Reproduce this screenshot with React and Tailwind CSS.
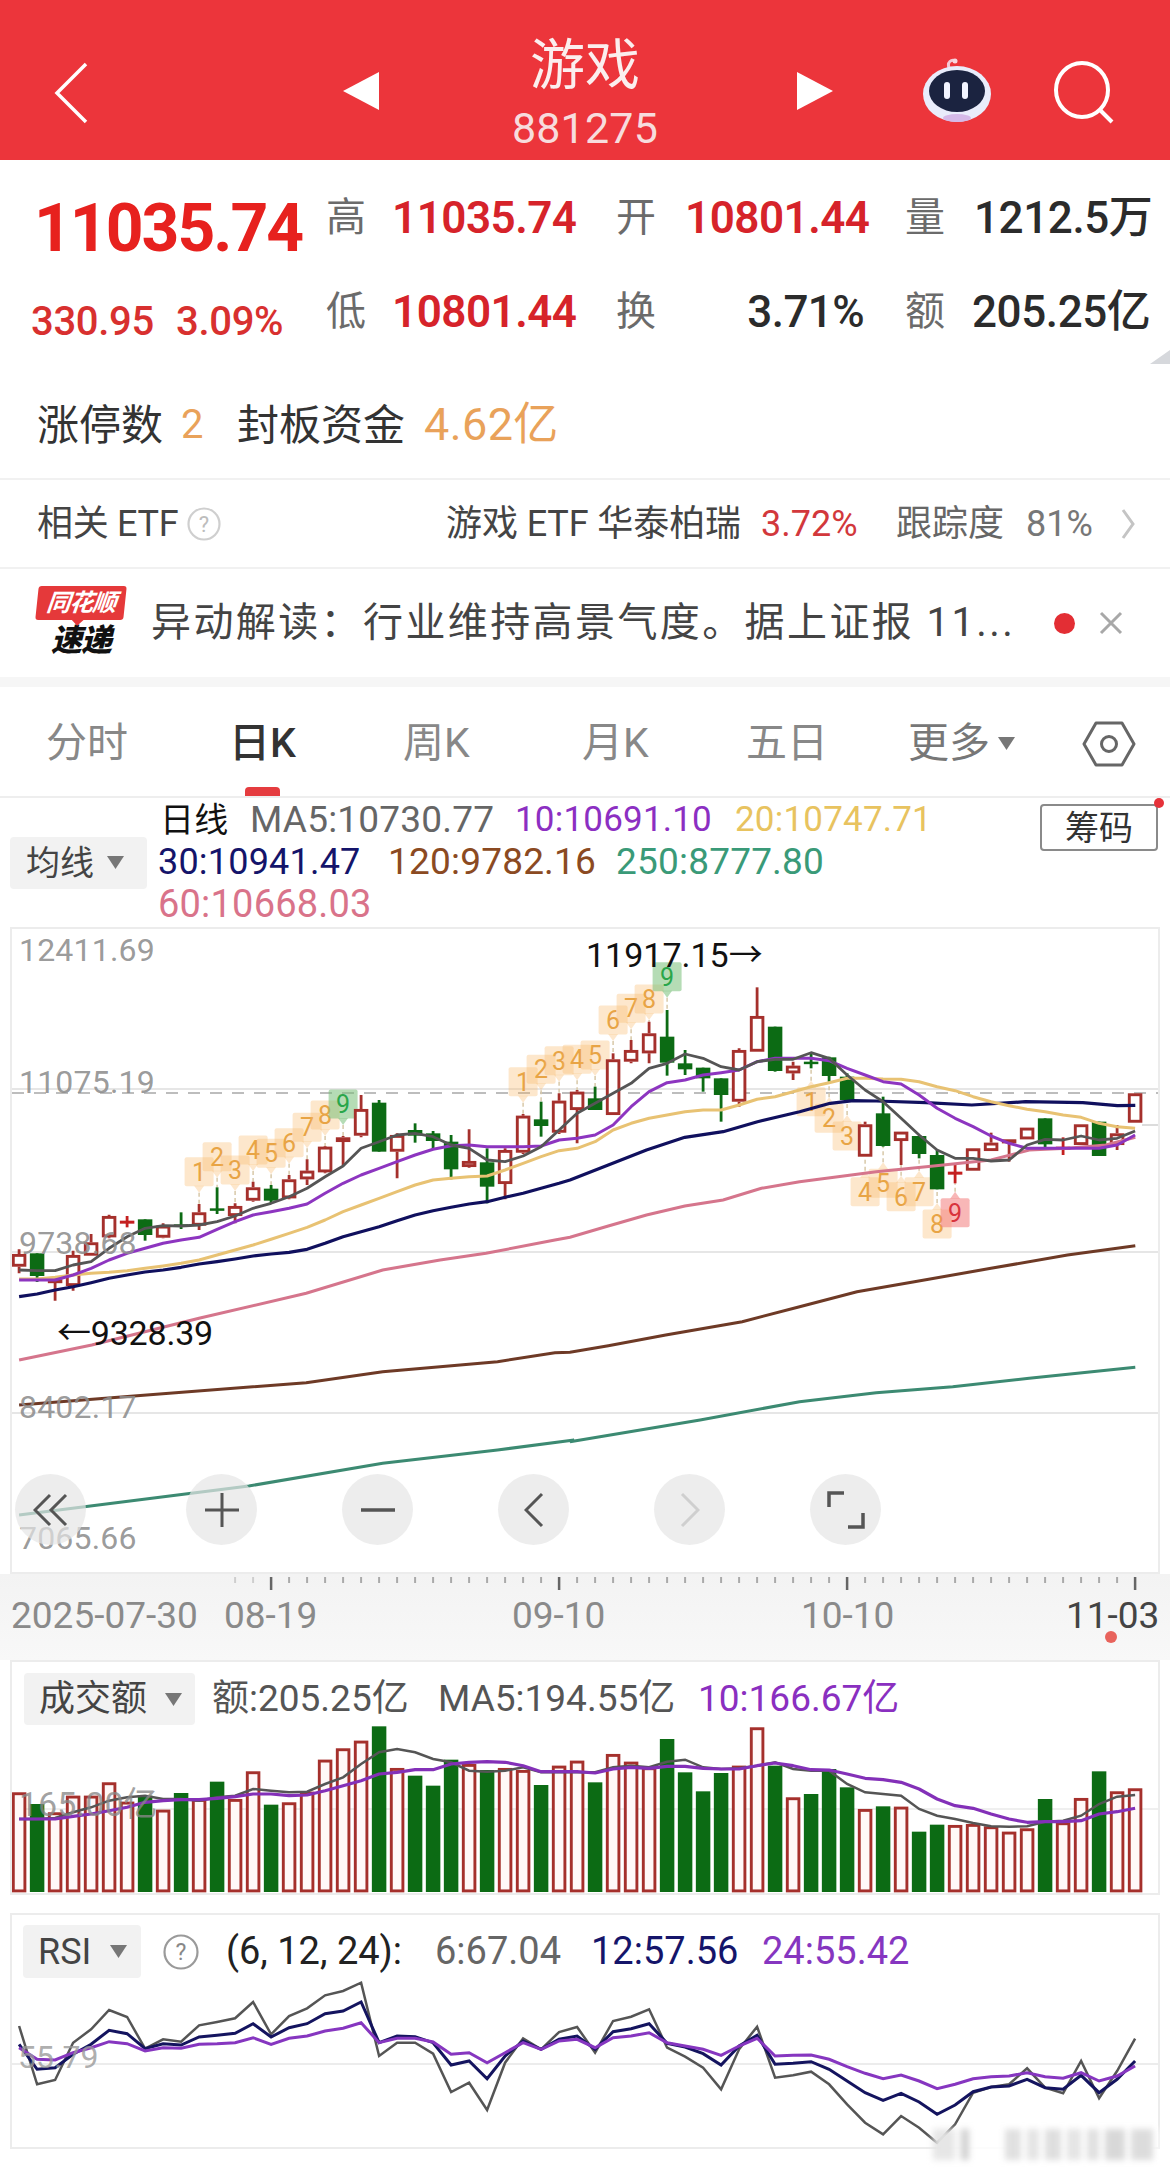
import React from "react";

const cx = (i) => 19.1 + 18 * i;
const ky = (v) => 1080 + v / 3;
const R = "#a5302c";
const G = "#0c6b14";

const candles = [
  ["r",508,522,560,580],["g",520,520,588,606],["r",595,598,603,662],["r",512,525,618,632],["r",462,487,527,527],
  ["r",404,408,472,475],["d",408,422,428,442],["g",418,418,465,482],["r",430,437,473,475],["g",397,433,440,447],
  ["r",372,397,437,450],["g",322,385,392,402],["r",370,378,408,430],["r",305,322,362,365],["g",315,326,362,370],
  ["r",285,298,355,358],["r",238,272,298,315],["r",198,200,277,280],["r",168,172,186,255],["r",45,87,167,172],
  ["g",60,68,215,215],["r",160,165,215,295],["g",130,150,167,188],["g",153,160,183,208],["g",165,185,268,298],
  ["r",148,243,261,263],["g",205,247,320,370],["r",205,210,312,358],["r",102,107,218,222],["g",65,118,138,170],
  ["r",40,62,158,162],["r",30,35,90,190],["g",20,55,90,90],["r",-80,-62,105,105],["r",-120,-90,-55,-50],
  ["r",-175,-140,-80,-50],["g",-210,-130,-52,-13],["g",-90,-50,-32,-15],["g",-37,-37,-5,35],["g",-5,-5,45,125],
  ["r",-95,-90,65,80],["r",-278,-192,-85,-85],["g",-160,-160,-27,-25],["r",-55,-43,-20,0],["g",-80,-55,-48,-35],
  ["g",-70,-68,-12,5],["g",-20,-10,60,60],["r",125,133,230,230],["g",50,100,198,200],["r",155,155,183,255],
  ["g",168,168,222,235],["g",210,225,328,328],["d",255,275,282,310],["r",205,205,272,272],["r",158,188,213,213],
  ["r",178,178,190,245],["r",143,143,178,178],["g",115,115,193,205],["d",172,200,205,225],["r",133,133,195,195],
  ["g",125,125,228,228],["r",135,160,195,210],["r",40,40,128,128],
];

const ma5 = [570,572,572,555,545,505,470,445,437,438,435,425,408,385,370,350,325,290,258,205,185,165,160,170,195,205,240,245,228,200,150,100,70,40,10,-35,-50,-78,-65,-40,-30,-55,-62,-62,-82,-65,-15,30,65,115,165,210,235,235,243,240,195,178,180,168,180,175,153];
const ma10 = [600,600,600,585,565,540,520,505,490,480,472,448,425,405,395,385,372,340,310,285,265,245,225,208,197,195,200,200,200,198,180,175,165,135,80,35,8,0,-15,-22,-30,-55,-65,-65,-65,-58,-35,-15,5,12,45,85,115,140,168,190,205,205,205,205,205,195,165];
const ma20 = [597,597,592,585,580,577,572,565,558,550,540,525,510,495,478,460,442,420,395,375,355,335,315,300,295,290,288,270,250,230,212,205,185,150,130,115,105,95,90,90,75,58,50,35,20,8,-5,-5,-3,-2,5,20,32,50,65,77,88,95,105,112,130,140,145];

const toI = (x, right) => (right ? 570 + x / 2.613 : x / 2.613);
const line = (arr) => arr.map((v, i) => `${cx(i).toFixed(1)},${ky(v).toFixed(1)}`).join(" ");
const freeLine = (left, right) =>
  [...left.map(([x, y]) => `${toI(x, false).toFixed(1)},${ky(y).toFixed(1)}`), ...right.map(([x, y]) => `${toI(x, true).toFixed(1)},${ky(y).toFixed(1)}`)].join(" ");

const ma30 = [650,642,630,620,608,595,585,576,570,562,552,545,537,528,522,517,508,490,470,455,440,422,405,392,382,372,365,352,340,325,310];
const ma30R = [[0,300],[100,255],[200,210],[300,172],[400,155],[490,125],[600,95],[680,70],[740,62],[800,63],[930,68],[1050,75],[1190,65],[1340,68],[1430,77],[1477,76]];
const ma60L = [[50,840],[240,795],[520,715],[800,640],[1000,570],[1150,540],[1270,520],[1450,480]];
const ma60R = [[0,472],[100,438],[200,405],[300,378],[400,360],[500,325],[600,305],[700,290],[800,275],[950,258],[1100,240],[1200,210],[1300,205],[1400,195],[1477,172]];
const ma120L = [[50,975],[350,948],[800,908],[1000,875],[1300,845],[1450,818]];
const ma120R = [[0,817],[100,797],[250,765],[450,725],[600,680],[750,635],[900,605],[1100,565],[1300,525],[1477,497]];
const ma250L = [[50,1305],[500,1240],[650,1218],[1000,1150],[1300,1110],[1500,1080]];
const ma250R = [[0,1085],[340,1020],[600,965],[800,938],[1000,920],[1200,895],[1477,862]];

const td = [
  [10,815,"1"],[11,770,"2"],[12,810,"3"],[13,750,"4"],[14,760,"5"],[15,728,"6"],[16,682,"7"],[17,645,"8"],[18,612,"9","g"],
  [28,545,"1"],[29,508,"2"],[30,482,"3"],[31,478,"4"],[32,465,"5"],[33,360,"6"],[34,325,"7"],[35,297,"8"],[36,230,"9","g"],
  [44,605,"1",null,1],[45,655,"2",null,1],[46,708,"3",null,1],[47,875,"4",null,1],[48,850,"5",null,1],[49,890,"6",null,1],[50,875,"7",null,1],[51,972,"8",null,1],[52,938,"9","p",1],
];

const tops = [1120,1155,1180,1130,1130,1090,1148,1130,1172,1122,1140,1088,1140,1057,1157,1150,1118,1022,988,965,922,1047,1070,1100,1022,1035,1053,1047,1053,1098,1040,1025,1090,1005,1028,1045,960,1060,1117,1062,1040,925,1040,1135,1125,1050,1105,1170,1162,1163,1238,1217,1218,1215,1222,1238,1228,1140,1210,1137,1057,1117,1108];
const volG = new Set([1,7,9,11,14,20,22,23,24,26,29,32,36,37,38,39,42,44,45,46,48,50,51,57,60]);
const vm5 = [1200,1200,1197,1180,1165,1145,1135,1130,1140,1140,1145,1135,1130,1110,1115,1120,1118,1095,1075,1035,1000,990,1000,1020,1030,1055,1058,1055,1045,1060,1060,1060,1060,1045,1040,1045,1028,1022,1045,1050,1048,1040,1030,1050,1055,1055,1095,1120,1125,1130,1170,1190,1200,1212,1222,1223,1222,1208,1205,1190,1155,1133,1128];
const vm10 = [1200,1200,1200,1192,1185,1175,1165,1150,1145,1142,1142,1138,1133,1125,1125,1130,1128,1115,1100,1085,1065,1060,1052,1052,1035,1030,1028,1030,1040,1058,1058,1058,1062,1050,1045,1048,1042,1042,1048,1050,1050,1040,1032,1040,1052,1053,1065,1078,1082,1090,1110,1140,1160,1168,1185,1200,1210,1208,1208,1205,1185,1178,1168];
const vy = (v) => 1420 + v / 3;

const r6 = [375,550,537,425,385,327,348,443,415,422,373,363,352,303,400,345,322,283,270,245,465,425,425,458,573,545,627,485,412,445,393,378,455,360,347,325,440,467,500,565,445,377,530,523,512,550,610,665,700,645,680,725,670,575,558,550,502,560,577,480,592,510,413];
const r12 = [430,505,500,460,430,388,398,443,428,432,408,403,397,368,408,380,368,338,330,303,425,405,407,425,492,480,533,465,420,445,415,405,445,392,383,368,427,438,458,492,435,403,490,487,482,505,540,575,598,577,603,640,612,572,558,555,535,560,565,523,575,535,480];
const r24 = [440,475,477,455,440,422,428,450,440,442,430,428,425,410,430,412,405,390,382,365,425,412,412,423,460,455,485,455,425,445,420,415,440,410,405,395,425,435,445,463,435,412,465,463,462,475,497,517,533,522,540,563,550,533,527,525,515,527,532,515,540,525,495];
const ry = (v) => 1900 + v / 3;
const pts = (arr, f) => arr.map((v, i) => `${cx(i).toFixed(1)},${f(v).toFixed(1)}`).join(" ");

const Num = ({ className = "", children }) => <span className={`whitespace-nowrap ${className}`}>{children}</span>;

function Caret({ className = "" }) {
  return (
    <svg width="17" height="13" viewBox="0 0 17 13" className={className}>
      <path d="M0 0H17L8.5 13Z" fill="#777" />
    </svg>
  );
}

function Header() {
  return (
    <div className="h-[160px] bg-[#ec353b] relative flex items-center text-white shrink-0">
      <svg width="36" height="62" viewBox="0 0 36 62" className="ml-[53px] mt-[26px] shrink-0">
        <path d="M33 2L4 31L33 60" stroke="#fff" strokeWidth="3.5" fill="none" />
      </svg>
      <svg width="36" height="38" viewBox="0 0 36 38" className="ml-[254px] mt-[22px] shrink-0">
        <path d="M36 0V38L0 19Z" fill="#fff" />
      </svg>
      <div className="w-[412px] mr-[6px] flex flex-col items-center shrink-0 mt-[26px]">
        <div className="text-[55px] leading-[60px] h-[70px] text-[#fbeeee]">游戏</div>
        <div className="text-[43px] leading-[46px] text-[#f7dcdd] tracking-[0.2px]">881275</div>
      </div>
      <svg width="36" height="38" viewBox="0 0 36 38" className="mt-[22px] shrink-0">
        <path d="M0 0V38L36 19Z" fill="#fff" />
      </svg>
      <svg width="72" height="66" viewBox="0 0 72 66" className="ml-[88px] mt-[22px] shrink-0">
        <path d="M28 10C26 4 30 1 35 3" stroke="#f4c8d4" strokeWidth="3" fill="none" />
        <circle cx="34" cy="3" r="2.5" fill="#f8d5de" />
        <ellipse cx="36" cy="36" rx="34" ry="28" fill="#e9ecfb" />
        <ellipse cx="36" cy="33" rx="28" ry="21" fill="#1b2340" />
        <rect x="23" y="24" width="6" height="17" rx="3" fill="#f2f4ff" />
        <rect x="41" y="24" width="6" height="17" rx="3" fill="#f2f4ff" />
        <ellipse cx="36" cy="60" rx="14" ry="4" fill="#d5b9e8" />
      </svg>
      <svg width="62" height="64" viewBox="0 0 62 64" className="ml-[60px] mt-[24px] shrink-0">
        <ellipse cx="29" cy="30" rx="26" ry="27" stroke="#fff" strokeWidth="4" fill="none" />
        <path d="M46 49L59 62" stroke="#fff" strokeWidth="4" fill="none" />
      </svg>
    </div>
  );
}

function Quote() {
  return (
    <div className="h-[318px] shrink-0 bg-white relative [font-family:Roboto,'Noto_Sans_CJK_SC',sans-serif]">
      <div className="grid grid-cols-[326px_66px_224px_69px_220px_69px_196px] grid-rows-[92px_96px] pt-[12px] items-center">
        <div className="pl-[34px] pt-[22px] text-[66px] leading-[68px] font-bold text-[#e7211e] tracking-[-2px] whitespace-nowrap">11035.74</div>
        <div className="text-[40px] text-[#6b6b6b]">高</div>
        <Num className="text-[44px] font-semibold text-[#d6232a] tracking-[-0.5px]">11035.74</Num>
        <div className="text-[40px] text-[#6b6b6b]">开</div>
        <Num className="text-[44px] font-semibold text-[#d6232a] tracking-[-0.5px]">10801.44</Num>
        <div className="text-[40px] text-[#6b6b6b]">量</div>
        <Num className="text-[44px] font-medium text-[#2b2b2b] tracking-[-0.4px]">1212.5万</Num>

        <div className="pl-[31px] pt-[20px] text-[40px] leading-[44px] font-medium text-[#d8302f] whitespace-nowrap flex gap-[22px] tracking-[-0.3px]">
          <span>330.95</span>
          <span>3.09%</span>
        </div>
        <div className="text-[40px] text-[#6b6b6b]">低</div>
        <Num className="text-[44px] font-semibold text-[#d6232a] tracking-[-0.5px]">10801.44</Num>
        <div className="text-[40px] text-[#6b6b6b]">换</div>
        <Num className="text-[44px] font-medium text-[#2b2b2b] text-right pr-[41px] tracking-[-0.6px]">3.71%</Num>
        <div className="text-[40px] text-[#6b6b6b]">额</div>
        <Num className="text-[44px] font-medium text-[#2b2b2b] tracking-[-0.4px] -ml-[2px]">205.25亿</Num>
      </div>
      <div className="flex items-center h-[72px] mt-[29px] pl-[37px] text-[42px] text-[#333]">
        <span className="w-[144px]">涨停数</span>
        <span className="w-[56px] text-[#e9a25a] text-[40px]">2</span>
        <span className="w-[187px]">封板资金</span>
        <span className="text-[#e9a25a] text-[45px] tracking-[0.4px]">4.62亿</span>
      </div>
      <div className="absolute right-0 bottom-[114px] w-0 h-0 border-l-[20px] border-l-transparent border-b-[14px] border-b-[#d6d8dc]"></div>
    </div>
  );
}

function EtfRow() {
  return (
    <div className="h-[91px] shrink-0 border-y-2 border-[#f1f1f1] flex items-center text-[36px] [font-family:Roboto,'Noto_Sans_CJK_SC',sans-serif]">
      <span className="pl-[37px] w-[187px] text-[#444] whitespace-nowrap tracking-[-0.3px]">相关 ETF</span>
      <svg width="34" height="34" viewBox="0 0 34 34" className="shrink-0">
        <circle cx="17" cy="17" r="15.5" stroke="#cfcfcf" strokeWidth="2.2" fill="none" />
        <text x="17" y="25" textAnchor="middle" fontSize="22" fill="#bdbdbd" fontFamily="Roboto">?</text>
      </svg>
      <span className="ml-[225px] w-[315px] text-[#444] whitespace-nowrap tracking-[-0.1px]">游戏 ETF 华泰柏瑞</span>
      <span className="w-[135px] text-[#d2383c] whitespace-nowrap">3.72%</span>
      <span className="w-[130px] text-[#666] whitespace-nowrap">跟踪度</span>
      <span className="w-[94px] text-[#777] whitespace-nowrap">81%</span>
      <svg width="16" height="32" viewBox="0 0 16 32" className="shrink-0">
        <path d="M3 2L13 16L3 30" stroke="#c4c4c4" strokeWidth="3" fill="none" />
      </svg>
    </div>
  );
}

function AlertRow() {
  return (
    <div className="h-[108px] shrink-0 flex items-center [font-family:Roboto,'Noto_Sans_CJK_SC',sans-serif]">
      <div className="ml-[37px] w-[88px] shrink-0 flex flex-col items-center pb-[4px]">
        <div className="relative w-[88px] h-[34px] bg-[#e5393a] rounded-[3px] -skew-x-6 flex items-center justify-center">
          <span className="text-[24px] leading-none font-bold italic text-white tracking-[-1px]">同花顺</span>
          <span className="absolute -bottom-[4px] left-[38px] w-[9px] h-[9px] bg-[#e5393a] rotate-45"></span>
        </div>
        <span className="mt-[5px] text-[31px] leading-[31px] font-black italic text-[#111] tracking-[-1px]">速递</span>
      </div>
      <span className="ml-[26px] w-[853px] text-[40px] text-[#444] whitespace-nowrap tracking-[2.4px]">异动解读：行业维持高景气度。据上证报 11...</span>
      <span className="ml-[50px] w-[21px] h-[21px] rounded-full bg-[#e32e34] shrink-0"></span>
      <svg width="24" height="24" viewBox="0 0 24 24" className="ml-[24px] shrink-0">
        <path d="M2 2L22 22M22 2L2 22" stroke="#a8a8a8" strokeWidth="3" />
      </svg>
    </div>
  );
}

function Tabs() {
  return (
    <div className="h-[111px] shrink-0 border-b-2 border-[#eeeeee] relative flex items-center pt-[4px] text-[41px] text-[#888] [font-family:Roboto,'Noto_Sans_CJK_SC',sans-serif]">
      <span className="ml-[46px] w-[183px]">分时</span>
      <span className="w-[174px] text-[#333] font-medium whitespace-nowrap">日K</span>
      <span className="w-[179px] whitespace-nowrap">周K</span>
      <span className="w-[164px] whitespace-nowrap">月K</span>
      <span className="w-[162px] whitespace-nowrap">五日</span>
      <span className="w-[90px] whitespace-nowrap text-[#777]">更多</span>
      <Caret className="shrink-0" />
      <svg width="54" height="48" viewBox="0 0 54 48" className="ml-[67px] shrink-0">
        <path d="M14 3H40L52 24L40 45H14L2 24Z" stroke="#666" strokeWidth="3" fill="none" strokeLinejoin="round" />
        <circle cx="27" cy="24" r="7.5" stroke="#666" strokeWidth="3" fill="none" />
      </svg>
      <span className="absolute left-[245px] bottom-0 w-[35px] h-[9px] bg-[#e53c3f] rounded-t-[4px]"></span>
    </div>
  );
}

function Legend() {
  return (
    <div className="h-[129px] shrink-0 flex relative text-[35px] leading-[42px] [font-family:Roboto,'Noto_Sans_CJK_SC',sans-serif]">
      <div className="w-[158px] shrink-0 flex items-center">
        <div className="ml-[10px] w-[137px] h-[52px] bg-[#f2f2f2] rounded-[4px] flex items-center text-[#444] text-[34px]">
          <span className="ml-[16px] w-[81px]">均线</span>
          <Caret />
        </div>
      </div>
      <div className="flex flex-col w-[780px] pt-[1px] tracking-[0.2px]">
        <div className="flex h-[42px] whitespace-nowrap">
          <span className="w-[92px] pl-[2px] text-[#111] text-[34px]">日线</span>
          <span className="w-[265px] text-[#666] text-[37px]">MA5:10730.77</span>
          <span className="w-[220px] text-[#8c2fc2]">10:10691.10</span>
          <span className="text-[#e8c35f]">20:10747.71</span>
        </div>
        <div className="flex h-[42px] whitespace-nowrap">
          <span className="w-[230px] text-[#14146a] text-[36px]">30:10941.47</span>
          <span className="w-[228px] text-[#8b4a22] text-[37px]">120:9782.16</span>
          <span className="text-[#3a9a78] text-[37px]">250:8777.80</span>
        </div>
        <div className="flex h-[42px] whitespace-nowrap">
          <span className="text-[#d9738a] text-[38px]">60:10668.03</span>
        </div>
      </div>
      <div className="ml-[102px] mt-[6px] w-[118px] h-[47px] border-2 border-[#8a8a8a] rounded-[4px] flex items-center justify-center text-[34px] text-[#333]">筹码</div>
      <span className="absolute left-[1154px] top-[0px] w-[10px] h-[10px] rounded-full bg-[#e6323a]"></span>
    </div>
  );
}

function Candle({ c, i }) {
  const [t, hi, top, bot, lo] = c;
  const x = cx(i);
  if (t === "g") {
    return (
      <g>
        <path d={`M${x} ${ky(hi)}V${ky(lo)}`} stroke={G} strokeWidth="2.8" />
        <rect x={x - 7.25} y={ky(top)} width="14.5" height={Math.max(ky(bot) - ky(top), 2.5)} fill={G} />
      </g>
    );
  }
  if (t === "d") {
    return (
      <g>
        <path d={`M${x} ${ky(hi)}V${ky(lo)}`} stroke="#c42020" strokeWidth="2.8" />
        <rect x={x - 7.25} y={ky(top)} width="14.5" height="3" fill="#c42020" />
      </g>
    );
  }
  return (
    <g>
      <path d={`M${x} ${ky(hi)}V${ky(top)}M${x} ${ky(bot)}V${ky(lo)}`} stroke={R} strokeWidth="2.8" />
      <rect x={x - 5.8} y={ky(top) + 1.4} width="11.6" height={Math.max(ky(bot) - ky(top) - 2.8, 1)} fill="#fff" stroke={R} strokeWidth="2.9" />
    </g>
  );
}

function TdTag({ t }) {
  const [i, v, n, kind, below] = t;
  const x = cx(i);
  const y = 900 + v / 3;
  const fill = kind === "g" ? "#78c078" : kind === "p" ? "#f27c7c" : "#f9b565";
  const txt = kind === "g" ? "#2aa64a" : kind === "p" ? "#d8343c" : "#e8a445";
  const opacity = kind ? 0.55 : 0.33;
  const tip = below ? `M${x - 5} ${y - 14}L${x} ${y - 21}L${x + 5} ${y - 14}Z` : `M${x - 5} ${y + 14}L${x} ${y + 21}L${x + 5} ${y + 14}Z`;
  const c = candles[i];
  const dash = below
    ? `M${x} ${y - 21}V${ky(c[4])}`
    : `M${x} ${y + 21}V${ky(c[1])}`;
  return (
    <g>
      <path d={dash} stroke="#d8c8a8" strokeWidth="1.5" strokeDasharray="4 3" />
      <path d={tip} fill={fill} opacity={opacity} />
      <rect x={x - 14.5} y={y - 14.5} width="29" height="29" rx="2" fill={fill} opacity={opacity} />
      <text x={x} y={y + 9} textAnchor="middle" fontSize="25" fontFamily="Roboto" fill={txt}>{n}</text>
    </g>
  );
}

function CircleBtn({ children, className = "" }) {
  return <div className={`w-[71px] h-[71px] rounded-full bg-[#e6e6e6]/70 flex items-center justify-center shrink-0 ${className}`}>{children}</div>;
}

function AxisLabel({ className, children }) {
  return <span className={`absolute left-[7px] text-[32px] leading-[36px] text-[#8e8e8e]/90 tracking-[0.2px] ${className}`}>{children}</span>;
}

function MainChart() {
  return (
    <div className="ml-[10px] w-[1150px] h-[647px] shrink-0 border-2 border-[#ececec] relative [font-family:Roboto,'Noto_Sans_CJK_SC',sans-serif]">
      <svg width="1146" height="643" viewBox="12 929 1146 643" className="block">
        <path d="M12 1089H1158M12 1252H1158M12 1413H1158" stroke="#e6e6e6" strokeWidth="2" />
        <path d="M1142 1125H1158" stroke="#dcdcdc" strokeWidth="2" />
        <path d="M12 1093H1158" stroke="#bdbdbd" strokeWidth="2" strokeDasharray="12 10" />
        {td.map((t, i) => <TdTag key={i} t={t} />)}
        {candles.map((c, i) => <Candle key={i} c={c} i={i} />)}
        <polyline points={freeLine(ma250L, ma250R)} fill="none" stroke="#3c8a72" strokeWidth="3" />
        <polyline points={freeLine(ma120L, ma120R)} fill="none" stroke="#6e3a26" strokeWidth="3" />
        <polyline points={freeLine(ma60L, ma60R)} fill="none" stroke="#d5758c" strokeWidth="3" />
        <polyline points={`${line(ma30)} ${ma30R.map(([x, y]) => `${toI(x, true).toFixed(1)},${ky(y).toFixed(1)}`).join(" ")}`} fill="none" stroke="#10105e" strokeWidth="3.2" strokeLinejoin="round" />
        <polyline points={line(ma20)} fill="none" stroke="#e8c273" strokeWidth="3" strokeLinejoin="round" />
        <polyline points={line(ma10)} fill="none" stroke="#8d35c0" strokeWidth="3" strokeLinejoin="round" />
        <polyline points={line(ma5)} fill="none" stroke="#555" strokeWidth="2.8" strokeLinejoin="round" />
      </svg>
      <AxisLabel className="top-[3px]">12411.69</AxisLabel>
      <AxisLabel className="top-[135px]">11075.19</AxisLabel>
      <AxisLabel className="top-[296px]">9738.68</AxisLabel>
      <AxisLabel className="top-[460px]">8402.17</AxisLabel>
      <AxisLabel className="top-[591px]">7065.66</AxisLabel>
      <span className="absolute left-[574px] top-[6px] text-[34px] leading-[40px] text-[#111] whitespace-nowrap">11917.15→</span>
      <span className="absolute left-[45px] top-[384px] text-[34px] leading-[40px] text-[#111] whitespace-nowrap tracking-[-0.2px]">←9328.39</span>
      <div className="absolute left-[3px] top-[545px] flex gap-[85px]">
        <CircleBtn>
          <svg width="36" height="34" viewBox="0 0 36 34"><path d="M17 2L2 17L17 32M33 2L18 17L33 32" stroke="#555" strokeWidth="3" fill="none" /></svg>
        </CircleBtn>
        <CircleBtn className="ml-[15px]">
          <svg width="34" height="34" viewBox="0 0 34 34"><path d="M17 0V34M0 17H34" stroke="#555" strokeWidth="3" /></svg>
        </CircleBtn>
        <CircleBtn>
          <svg width="34" height="6" viewBox="0 0 34 6"><path d="M0 3H34" stroke="#555" strokeWidth="3.5" /></svg>
        </CircleBtn>
        <CircleBtn>
          <svg width="20" height="36" viewBox="0 0 20 36"><path d="M18 2L2 18L18 34" stroke="#555" strokeWidth="3" fill="none" /></svg>
        </CircleBtn>
        <CircleBtn>
          <svg width="20" height="36" viewBox="0 0 20 36"><path d="M2 2L18 18L2 34" stroke="#cfcfcf" strokeWidth="3" fill="none" /></svg>
        </CircleBtn>
        <CircleBtn>
          <svg width="38" height="38" viewBox="0 0 38 38"><path d="M2 16V2H17M36 22V36H21" stroke="#555" strokeWidth="3.5" fill="none" /></svg>
        </CircleBtn>
      </div>
    </div>
  );
}

function DateStrip() {
  const ticks = Array.from({ length: 51 }, (_, k) => k + 12);
  const major = new Set([14, 30, 46, 62]);
  return (
    <div className="h-[86px] shrink-0 bg-gradient-to-b from-[#f3f3f3] to-[#f8f8f8] relative text-[#8a8a8a] text-[37px] [font-family:Roboto,sans-serif]">
      <svg width="1170" height="18" viewBox="0 0 1170 18" className="block">
        {ticks.map((i) => (
          <path key={i} d={`M${cx(i)} 3V${major.has(i) ? 16 : 9}`} stroke={major.has(i) ? "#666" : "#aaa"} strokeWidth={major.has(i) ? 2.5 : 2} opacity={i < 14 ? 0.5 : 1} />
        ))}
      </svg>
      <div className="flex h-[48px] items-center whitespace-nowrap">
        <span className="ml-[11px] w-[213px]">2025-07-30</span>
        <span className="w-[288px]">08-19</span>
        <span className="w-[289px]">09-10</span>
        <span className="w-[265px]">10-10</span>
        <span className="text-[#444]">11-03</span>
      </div>
      <span className="absolute left-[1105px] top-[57px] w-[12px] h-[12px] rounded-full bg-[#e8635c]"></span>
    </div>
  );
}

function VolPanel() {
  return (
    <div className="ml-[10px] w-[1150px] h-[235px] shrink-0 border-2 border-[#ececec] relative [font-family:Roboto,'Noto_Sans_CJK_SC',sans-serif]">
      <div className="flex items-center h-[52px] mt-[11px] ml-[12px] text-[37px] whitespace-nowrap">
        <div className="w-[171px] h-[52px] bg-[#f2f2f2] rounded-[4px] flex items-center text-[#444] text-[36px] shrink-0">
          <span className="ml-[15px] w-[126px]">成交额</span>
          <Caret />
        </div>
        <span className="ml-[17px] w-[226px] text-[#555]">额:205.25亿</span>
        <span className="w-[260px] text-[#555]">MA5:194.55亿</span>
        <span className="text-[#8a2fc0]">10:166.67亿</span>
      </div>
      <svg width="1146" height="167" viewBox="12 1727 1146 167" className="block mt-[1px]">
        <path d="M12 1810H1158" stroke="#efefef" strokeWidth="2" />
        {tops.map((v, i) =>
          volG.has(i) ? (
            <rect key={i} x={cx(i) - 7.25} y={vy(v)} width="14.5" height={1893 - vy(v)} fill={G} />
          ) : (
            <rect key={i} x={cx(i) - 5.8} y={vy(v) + 1.4} width="11.6" height={1890.5 - vy(v)} fill="#fff8f8" stroke={R} strokeWidth="2.9" />
          )
        )}
        <polyline points={pts(vm5, vy)} fill="none" stroke="#555" strokeWidth="2.5" />
        <polyline points={pts(vm10, vy)} fill="none" stroke="#8330b8" strokeWidth="3.2" strokeLinejoin="round" />
      </svg>
      <span className="absolute left-[7px] top-[123px] text-[34px] leading-[38px] text-[#888]/80">165.00亿</span>
    </div>
  );
}

function RsiPanel() {
  return (
    <div className="ml-[10px] mt-[18px] w-[1150px] h-[236px] shrink-0 border-2 border-[#ececec] relative [font-family:Roboto,'Noto_Sans_CJK_SC',sans-serif]">
      <div className="flex items-center h-[53px] mt-[10px] ml-[11px] text-[38px] whitespace-nowrap">
        <div className="w-[118px] h-[53px] bg-[#f2f2f2] rounded-[4px] flex items-center text-[#444] text-[36px] shrink-0">
          <span className="ml-[15px] w-[72px]">RSI</span>
          <Caret />
        </div>
        <svg width="36" height="36" viewBox="0 0 36 36" className="ml-[22px] shrink-0">
          <circle cx="18" cy="18" r="16.5" stroke="#9a9a9a" strokeWidth="2.2" fill="none" />
          <text x="18" y="26" textAnchor="middle" fontSize="23" fill="#888" fontFamily="Roboto">?</text>
        </svg>
        <span className="ml-[27px] w-[209px] text-[#222]">(6, 12, 24):</span>
        <span className="w-[156px] text-[#666]">6:67.04</span>
        <span className="w-[171px] text-[#15156a]">12:57.56</span>
        <span className="text-[#8636c0]">24:55.42</span>
      </div>
      <svg width="1146" height="168" viewBox="12 1979 1146 168" className="block mt-[2px]">
        <path d="M12 2063H1158" stroke="#e6e6e6" strokeWidth="1.5" />
        <polyline points={pts(r6, ry)} fill="none" stroke="#555" strokeWidth="2.5" />
        <polyline points={pts(r12, ry)} fill="none" stroke="#14145f" strokeWidth="3" />
        <polyline points={pts(r24, ry)} fill="none" stroke="#8636c0" strokeWidth="3" />
      </svg>
      <span className="absolute left-[6px] top-[124px] text-[32px] leading-[36px] text-[#999]/80">55.79</span>
      <div className="absolute left-[921px] top-[214px] w-[226px] h-[31px] bg-white/85 blur-[3px] flex gap-[6px] items-stretch">
        <span className="w-[22px] bg-[#dcdcdc]/70"></span>
        <span className="w-[8px] bg-[#d0d0d0]"></span>
        <span className="w-[24px]"></span>
        <span className="w-[16px] bg-[#e0e0e0]"></span>
        <span className="w-[12px] bg-[#e4e4e4]"></span>
        <span className="w-[16px] bg-[#dedede]"></span>
        <span className="w-[14px] bg-[#e4e4e4]"></span>
        <span className="w-[12px] bg-[#e0e0e0]"></span>
        <span className="w-[20px] bg-[#d8d8d8]"></span>
        <span className="w-[22px] bg-[#dcdcdc]"></span>
      </div>
    </div>
  );
}

export default function App() {
  return (
    <div className="w-[1170px] h-[2171px] bg-white overflow-hidden flex flex-col [font-family:Roboto,'Noto_Sans_CJK_SC',sans-serif]">
      <Header />
      <Quote />
      <EtfRow />
      <AlertRow />
      <div className="h-[10px] bg-[#f6f6f6] shrink-0"></div>
      <Tabs />
      <Legend />
      <MainChart />
      <DateStrip />
      <VolPanel />
      <RsiPanel />
    </div>
  );
}
